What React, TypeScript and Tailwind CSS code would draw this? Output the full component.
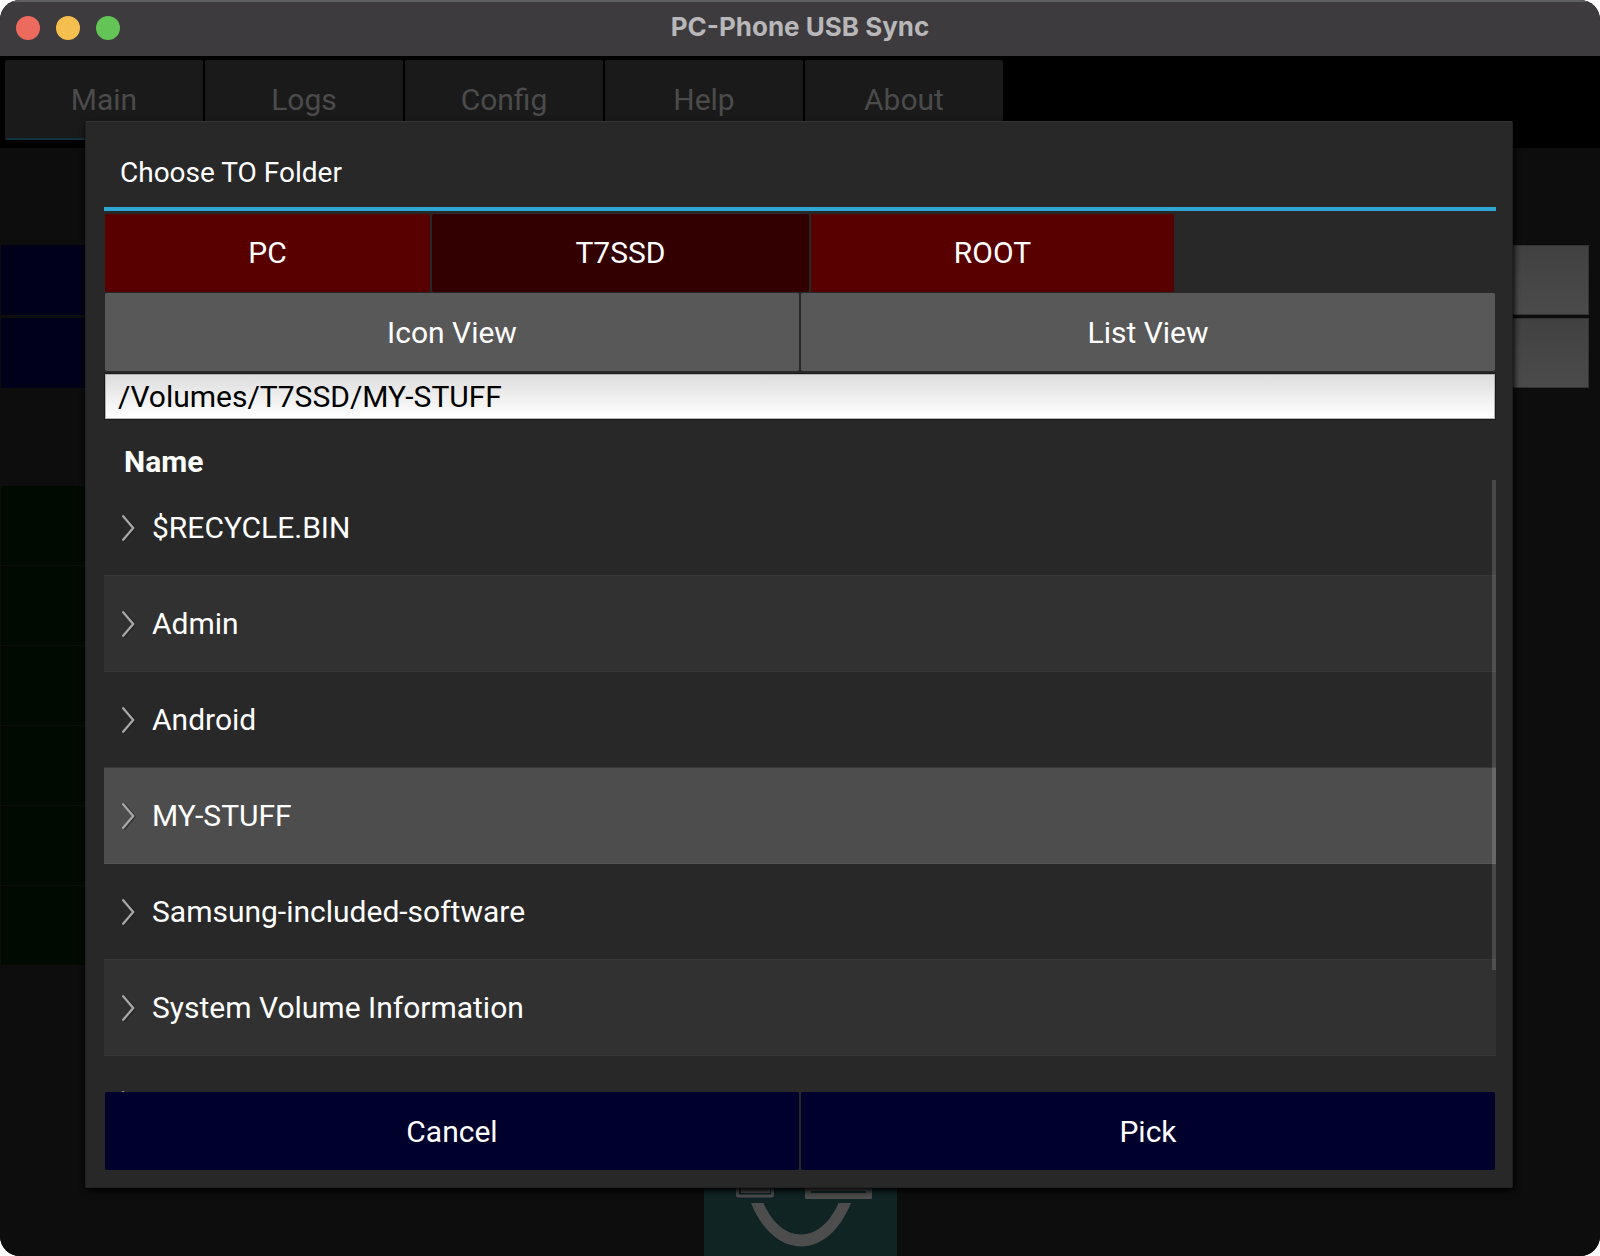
import { useState } from "react";
import clsx from "clsx";

const tabs = ["Main", "Logs", "Config", "Help", "About"];

const folders = [
  "$RECYCLE.BIN",
  "Admin",
  "Android",
  "MY-STUFF",
  "Samsung-included-software",
  "System Volume Information",
  "",
];

const Chevron = () => (
  <svg width="16" height="28" viewBox="0 0 16 28" fill="none" strokeLinecap="round" aria-hidden="true">
    <path d="M5 3 L14.500 14.500 L5 26.500" stroke="#1c1c1c" strokeOpacity="0.5" strokeWidth="2.500" />
    <path d="M3.200 2.200 L13.200 14 L3.200 25.800" stroke="#a6a6a6" strokeWidth="2.300" />
  </svg>
);

const Logo = () => (
  <svg width="193" height="192" viewBox="0 0 193 192" aria-hidden="true">
    <rect width="193" height="192" fill="#102424" />
    {/* phone */}
    <rect x="33.5" y="60" width="35" height="72" rx="1" fill="none" stroke="#4d4d4d" strokeWidth="3" />
    <rect x="37" y="66" width="29" height="63" fill="#4d4d4d" />
    <rect x="39" y="68" width="25" height="59" fill="#434343" />
    {/* laptop */}
    <rect x="101" y="118" width="67" height="17" rx="1" fill="#4d4d4d" />
    <rect x="107" y="127" width="55" height="2" fill="#102424" />
    {/* cable */}
    <path
      d="M47 139 C58 166 76 182.500 97 182.500 C118 182.500 136 166 147 139 H134.500 C126 159 112 170.500 97 170.500 C82 170.500 68 159 59.500 139 Z"
      fill="#4d4d4d"
    />
  </svg>
);

const TitleBar = () => (
  <header className="grid h-14 grid-cols-[1fr_auto_1fr] items-center border-t-2 border-[#5f5e61] bg-[#3d3b3e] px-4 pb-[2px]">
    <div className="flex gap-4">
      <button aria-label="Close" className="size-6 rounded-full bg-[#ed6a5f]" />
      <button aria-label="Minimize" className="size-6 rounded-full bg-[#f5bf4f]" />
      <button aria-label="Zoom" className="size-6 rounded-full bg-[#62c555]" />
    </div>
    <h1 className="pb-[2px] font-[Inter,sans-serif] text-[26px] leading-8 font-bold text-[#b8b7b9]">
      PC-Phone USB Sync
    </h1>
  </header>
);

const MainScreen = () => (
  <>
    <nav className="flex h-[92px] gap-[2px] bg-black pt-1 pl-[5px]">
      {tabs.map((tab, index) => (
        <button
          key={tab}
          className={clsx(
            "h-20 w-[198px] rounded-xs border-b-2 bg-[#1a1a1a] pt-px text-[#4b4b4b]",
            index === 0 ? "border-[#12323f]" : "border-[#1a1a1a]"
          )}
        >
          {tab}
        </button>
      ))}
    </nav>

    <main className="flex flex-1 flex-col bg-[#0d0d0d] pl-px" aria-hidden="true">
      <div className="mt-[97px] mr-[11px] flex flex-col gap-[3px]">
        {[0, 1].map((row) => (
          <div key={row} className="flex h-[70px] gap-[2px]">
            <div className="flex-1 bg-[#00001a]" />
            <div className="flex-1 border border-[#333333] bg-linear-to-b from-[#414141] to-[#4b4b4b]" />
          </div>
        ))}
      </div>
      <div className="mt-[98px] mr-[11px] flex flex-col gap-px">
        {[0, 1, 2, 3, 4, 5].map((row) => (
          <div key={row} className="h-[79px] w-1/2 bg-[#000a00]" />
        ))}
      </div>
      <div className="mt-auto flex justify-center">
        <Logo />
      </div>
    </main>
  </>
);

const FolderDialog = () => {
  const [path, setPath] = useState("/Volumes/T7SSD/MY-STUFF");
  const [selected, setSelected] = useState("MY-STUFF");

  return (
    <section
      role="dialog"
      aria-labelledby="dialog-title"
      className="flex min-h-0 flex-1 flex-col rounded-xs border border-t-[#333333] border-r-[#202020] border-b-[#202020] border-l-[#202020] bg-[#282828] pr-4 pb-[17px] pl-[18px] text-white shadow-[1px_3px_6px_#000000]"
    >
      <h2
        id="dialog-title"
        className="border-b-4 border-[#2fa7d4] px-4 pt-[33px] pb-4 text-[28px] leading-9"
      >
        Choose TO Folder
      </h2>

      <div className="mx-px mt-[3px] flex gap-[2px]">
        <button className="h-[78px] w-[325px] rounded-xs bg-[#580000]">PC</button>
        <button className="h-[78px] w-[377px] rounded-xs bg-[#320000]">T7SSD</button>
        <button className="h-[78px] w-[363px] rounded-xs bg-[#580000]">ROOT</button>
      </div>

      <div className="mx-px mt-px grid grid-cols-2 gap-[2px]">
        <button className="h-[78px] rounded-xs bg-[#585858] pt-[2px]">Icon View</button>
        <button className="h-[78px] rounded-xs bg-[#585858] pt-[2px]">List View</button>
      </div>

      <input
        aria-label="Folder path"
        value={path}
        onChange={(e) => setPath(e.target.value)}
        className="mx-px mt-[3px] h-[45px] border border-[#b5b5b5] bg-linear-to-b from-[#dddddd] to-white px-3 text-black outline outline-[#181818]"
      />

      <h3 className="mt-[25px] px-5 leading-9 font-bold">Name</h3>

      <div className="relative min-h-0 flex-1 overflow-hidden">
        <ul>
          {folders.map((name, index) => (
            <li key={index}>
              <button
                aria-label={name || "Folder"}
                onClick={() => {
                  setSelected(name);
                  setPath(`/Volumes/T7SSD/${name}`);
                }}
                className={clsx(
                  "flex h-24 w-full items-center gap-4 border-b px-4 text-left",
                  selected === name
                    ? "border-[#555555] bg-[#4d4d4d]"
                    : index % 2 === 0
                      ? "border-[#373737] bg-[#282828]"
                      : "border-[#373737] bg-[#313131]"
                )}
              >
                <Chevron />
                {name}
              </button>
            </li>
          ))}
        </ul>
        {/* scroll thumb */}
        <div className="absolute top-0 right-0 h-4/5 w-1 bg-white/15" />
      </div>

      <div className="mx-px grid grid-cols-2 gap-[2px]">
        <button className="h-[78px] rounded-xs bg-[#00002d] pt-[2px]">Cancel</button>
        <button className="h-[78px] rounded-xs bg-[#00002d] pt-[2px]">Pick</button>
      </div>
    </section>
  );
};

export default function App() {
  return (
    <div className="relative flex min-h-screen flex-col overflow-hidden rounded-[20px] bg-black font-[Roboto,sans-serif] text-[30px] leading-9">
      <TitleBar />
      <MainScreen />
      <div className="absolute inset-0 flex pt-[121px] pr-[87px] pb-[68px] pl-[85px]">
        <FolderDialog />
      </div>
    </div>
  );
}
